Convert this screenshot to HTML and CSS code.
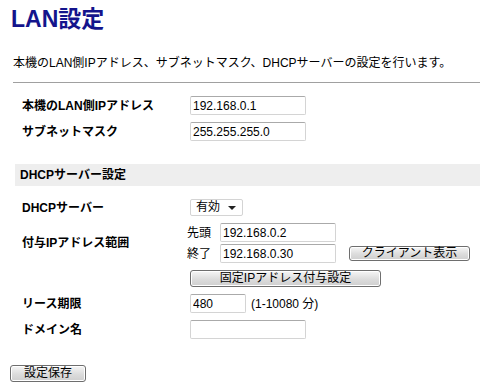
FILE: index.html
```html
<!DOCTYPE html>
<html lang="ja">
<head>
    <meta charset="UTF-8">
    <title>LAN設定</title>
    <link rel="stylesheet" href="styles.css">
</head>
<body>
    <div class="page">
        <h1>LAN設定</h1>
        <p class="desc">本機のLAN側IPアドレス、サブネットマスク、DHCPサーバーの設定を行います。</p>
        <hr>

        <form class="settings">
            <div class="row">
                <span class="label">本機のLAN側IPアドレス</span>
                <input class="ip" type="text" value="192.168.0.1">
            </div>
            <div class="row">
                <span class="label">サブネットマスク</span>
                <input class="ip" type="text" value="255.255.255.0">
            </div>

            <div class="section">DHCPサーバー設定</div>

            <div class="row first">
                <span class="label">DHCPサーバー</span>
                <div class="select">有効<span class="arrow"></span></div>
            </div>
            <div class="row">
                <span class="label">付与IPアドレス範囲</span>
                <div class="range">
                    <div class="range-line">
                        <span class="sub">先頭</span>
                        <input class="ip" type="text" value="192.168.0.2">
                    </div>
                    <div class="range-line">
                        <span class="sub">終了</span>
                        <input class="ip" type="text" value="192.168.0.30">
                        <button type="button" class="btn small">クライアント表示</button>
                    </div>
                </div>
            </div>
            <div class="row">
                <span class="label"></span>
                <button type="button" class="btn wide">固定IPアドレス付与設定</button>
            </div>
            <div class="row">
                <span class="label">リース期限</span>
                <input class="lease" type="text" value="480">
                <span class="note">(1-10080 分)</span>
            </div>
            <div class="row">
                <span class="label">ドメイン名</span>
                <input class="ip" type="text" value="">
            </div>

            <div class="actions">
                <button type="button" class="btn save">設定保存</button>
            </div>
        </form>
    </div>
</body>
</html>
```

FILE: styles.css
```css
* {
    margin: 0;
    padding: 0;
    box-sizing: border-box;
}

body {
    font-family: 'Liberation Sans', 'Noto Sans CJK JP', sans-serif;
    font-size: 12px;
    line-height: 16px;
    color: #000;
    background: #fff;
}

.page {
    padding: 6px 0 0 13px;
}

h1 {
    font-size: 23px;
    line-height: 26px;
    font-weight: bold;
    color: #14148c;
    margin-left: -2px;
}

.desc {
    margin-top: 23px;
}

hr {
    border: 0;
    border-top: 1px solid #a0a0a0;
    margin-top: 11px;
}

.settings {
    padding-top: 6px;
}

.row {
    display: flex;
    align-items: center;
    margin-top: 7px;
}

.row.first {
    margin-top: 13px;
}

.label {
    width: 177px;
    padding-left: 9px;
    font-weight: bold;
    flex-shrink: 0;
}

input {
    font-family: 'Liberation Sans', 'Noto Sans CJK JP', sans-serif;
    font-size: 12px;
    height: 19px;
    padding: 0 2px;
    border: 1px solid #d4d4d4;
    border-top-color: #aaa;
    border-radius: 2px;
    background: #fff;
    color: #000;
}

.ip {
    width: 116px;
}

.lease {
    width: 56px;
}

.note {
    margin-left: 5px;
}

.section {
    margin: 23px 0 0 2px;
    height: 22px;
    line-height: 22px;
    padding-left: 5px;
    background: #eeeeee;
    font-weight: bold;
}

.select {
    width: 53px;
    height: 17px;
    line-height: 15px;
    border: 1px solid #d4d4d4;
    border-radius: 2px;
    padding-left: 5px;
    display: flex;
    align-items: center;
}

.arrow {
    margin-left: 8px;
    width: 0;
    height: 0;
    border-left: 4px solid transparent;
    border-right: 4px solid transparent;
    border-top: 4px solid #222;
}

.range {
    margin-left: -3px;
    display: flex;
    flex-direction: column;
    gap: 2px;
}

.range-line {
    display: flex;
    align-items: center;
}

.sub {
    width: 33px;
}

.btn {
    font-family: 'Liberation Sans', 'Noto Sans CJK JP', sans-serif;
    font-size: 12px;
    line-height: 13px;
    color: #000;
    border: 1px solid #6e6e6e;
    border-radius: 3px;
    background: linear-gradient(#f6f6f6, #dcdcdc 55%, #cfcfcf);
    box-shadow: inset 0 0 0 1px #fff;
}

.btn.small {
    width: 121px;
    height: 15px;
    margin-left: 13px;
}

.btn.wide {
    width: 191px;
    height: 17px;
}

.actions {
    margin: 26px 0 0 -3px;
}

.btn.save {
    width: 76px;
    height: 17px;
}
```
